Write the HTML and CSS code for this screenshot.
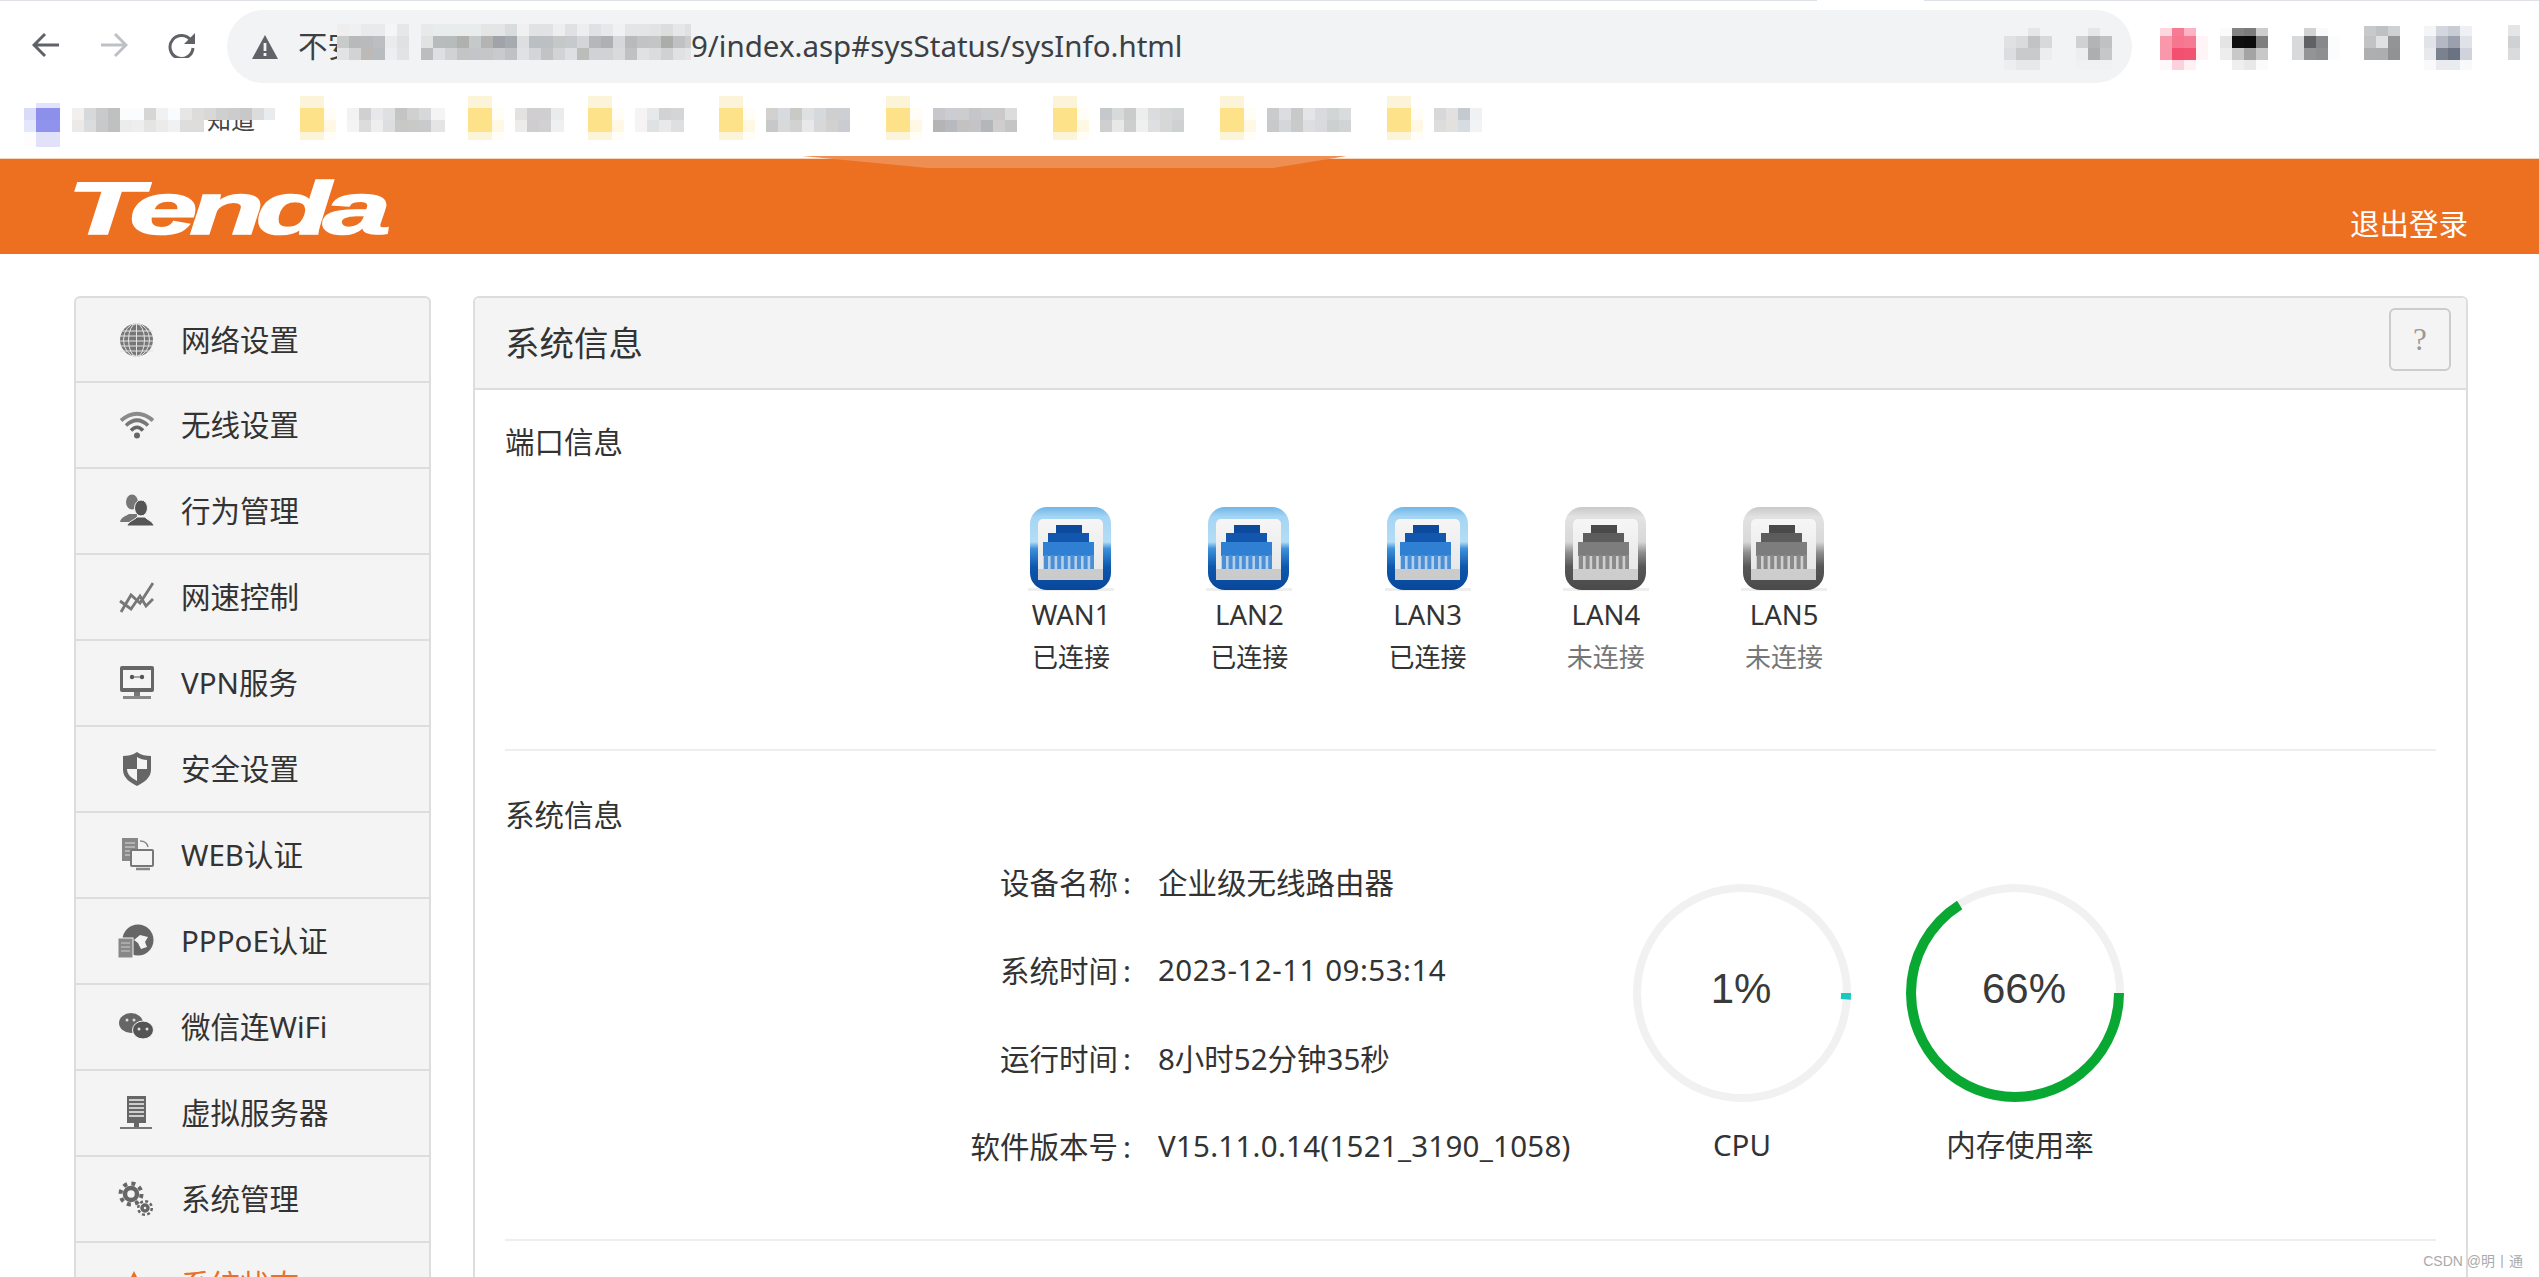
FILE: index.html
```html
<!DOCTYPE html>
<html lang="zh-CN">
<head>
<meta charset="utf-8">
<title>Tenda 系统信息</title>
<link rel="stylesheet" href="styles.css">
</head>
<body>
<svg class="sprite" width="0" height="0" aria-hidden="true">
  <defs>
    <linearGradient id="blueFrame" x1="0" y1="0" x2="0" y2="1">
      <stop offset="0" stop-color="#6fb6e8"/><stop offset=".12" stop-color="#a5d5f4"/><stop offset=".42" stop-color="#b5dcf5"/>
      <stop offset=".5" stop-color="#3f92da"/><stop offset=".72" stop-color="#0d58ad"/><stop offset="1" stop-color="#07479a"/>
    </linearGradient>
    <linearGradient id="greyFrame" x1="0" y1="0" x2="0" y2="1">
      <stop offset="0" stop-color="#c9c9c9"/><stop offset=".12" stop-color="#e2e2e2"/><stop offset=".42" stop-color="#d8d8d8"/>
      <stop offset=".55" stop-color="#8e8e8e"/><stop offset=".72" stop-color="#565656"/><stop offset="1" stop-color="#4a4a4a"/>
    </linearGradient>
    <linearGradient id="innerFrame" x1="0" y1="0" x2="0" y2="1">
      <stop offset="0" stop-color="#f6f6f6"/><stop offset="1" stop-color="#e4e4e4"/>
    </linearGradient>
    <symbol id="rjBlue" viewBox="0 0 86 84">
      <rect x="0" y="81" width="86" height="3" fill="#eeeeee"/>
      <rect x="2" y="0" width="81" height="83" rx="17" fill="url(#blueFrame)"/>
      <rect x="10" y="12" width="65" height="61" rx="5" fill="url(#innerFrame)"/>
      <rect x="10" y="62" width="65" height="11" fill="#cbcbcb"/>
      <rect x="28" y="18" width="26" height="9" fill="#0b4a9c"/>
      <rect x="20" y="26" width="41" height="10" fill="#1257ad"/>
      <rect x="15" y="35" width="51" height="14" fill="#2f80d3"/>
      <rect x="15" y="49" width="51" height="13" fill="#b4cfe9"/>
      <line x1="16" y1="55" x2="66" y2="55" stroke="#4b90d6" stroke-width="14" stroke-dasharray="4 2.6"/>
    </symbol>
    <symbol id="rjGrey" viewBox="0 0 86 84">
      <rect x="0" y="81" width="86" height="3" fill="#eeeeee"/>
      <rect x="2" y="0" width="81" height="83" rx="17" fill="url(#greyFrame)"/>
      <rect x="10" y="12" width="65" height="61" rx="5" fill="url(#innerFrame)"/>
      <rect x="10" y="62" width="65" height="11" fill="#cdcdcd"/>
      <rect x="28" y="18" width="26" height="9" fill="#4a4a4a"/>
      <rect x="20" y="26" width="41" height="10" fill="#5c5c5c"/>
      <rect x="15" y="35" width="51" height="14" fill="#7d7d7d"/>
      <rect x="15" y="49" width="51" height="13" fill="#cfcfcf"/>
      <line x1="16" y1="55" x2="66" y2="55" stroke="#8a8a8a" stroke-width="14" stroke-dasharray="4 2.6"/>
    </symbol>
  </defs>
</svg>

<div class="top-line"></div>
<div class="toolbar">
  <svg class="nav-icon" viewBox="0 0 28 26"><path d="M27 13H3M13 2 2 13l11 11" fill="none" stroke="#5f6368" stroke-width="3"/></svg>
  <svg class="nav-icon" viewBox="0 0 28 26"><path d="M1 13h24M15 2l11 11-11 11" fill="none" stroke="#bdc1c6" stroke-width="3"/></svg>
  <svg class="nav-icon" viewBox="0 0 28 26"><path d="M23 8.5A11.5 11.5 0 1 0 25 16" fill="none" stroke="#5f6368" stroke-width="3"/><path d="M27 1v11H16z" fill="#5f6368"/></svg>
  <div class="address">
    <svg class="warn" viewBox="0 0 26 24"><path d="M13 0 26 24H0z" fill="#5f6368"/><rect x="11.6" y="8" width="2.8" height="8" fill="#f1f3f4"/><rect x="11.6" y="18" width="2.8" height="3" fill="#f1f3f4"/></svg>
    <span class="url-lead">不安全</span>
    <span class="mos mos-url"></span>
    <span class="url-tail">9/index.asp#sysStatus/sysInfo.html</span>
    <span class="mos ext-a"></span>
    <span class="mos ext-b"></span>
  </div>
  <span class="mos ext-pink"></span>
  <span class="mos ext-black"></span>
  <span class="mos ext-grey"></span>
  <span class="mos ext-block"></span>
  <span class="mos ext-person"></span>
  <span class="mos ext-last"></span>
</div>

<div class="bookmarks">
  <span class="mos fav-purple"></span>
  <span class="mos bk m1"><span class="bk-tail">知道</span></span>
  <span class="mos fav-y"></span><span class="mos bk m2"></span>
  <span class="mos fav-y"></span><span class="mos bk m3"></span>
  <span class="mos fav-y"></span><span class="mos bk m4"></span>
  <span class="mos fav-y"></span><span class="mos bk m5"></span>
  <span class="mos fav-y"></span><span class="mos bk m6"></span>
  <span class="mos fav-y"></span><span class="mos bk m7"></span>
  <span class="mos fav-y"></span><span class="mos bk m8"></span>
  <span class="mos fav-y"></span><span class="mos bk m9"></span>
</div>

<header class="brand">
  <span class="notch"></span>
  <span class="logo">Tenda</span>
  <a class="logout">退出登录</a>
</header>

<main class="page">
  <nav class="menu">
    <a class="menu-item">
      <svg class="menu-icon" viewBox="0 0 36 36"><circle cx="18.5" cy="18" r="16.5" fill="#777"/><g fill="none" stroke="#e4e4e4" stroke-width="1"><path d="M2 9h33M2 14h33M2 19h33M2 24h33M2 29h33M18.5 1.500v33"/><ellipse cx="18.5" cy="18" rx="8" ry="16.500"/><ellipse cx="18.5" cy="18" rx="13" ry="16.500"/></g></svg>
      <span>网络设置</span>
    </a>
    <a class="menu-item">
      <svg class="menu-icon" viewBox="0 0 36 36"><g fill="none" stroke-linecap="butt"><path d="M3 13.500Q19 0 35 13.500" stroke="#8a8a8a" stroke-width="3.800"/><path d="M8 18.500Q19 8 30 18.500" stroke="#777" stroke-width="3.600"/><path d="M13 23.500Q19 17 25 23.500" stroke="#666" stroke-width="3.600"/></g><circle cx="19" cy="28.500" r="3" fill="#666"/></svg>
      <span>无线设置</span>
    </a>
    <a class="menu-item">
      <svg class="menu-icon" viewBox="0 0 36 36"><ellipse cx="14" cy="9" rx="6" ry="7.500" fill="#777"/><path d="M2 29c1-5 6-6 9-8h8v8z" fill="#777"/><ellipse cx="23" cy="15" rx="6.500" ry="8" fill="#555" stroke="#f4f4f4"/><path d="M9 33c1-5 8-6 10-9h8c2 3 8 4 9 9z" fill="#555" stroke="#f4f4f4"/></svg>
      <span>行为管理</span>
    </a>
    <a class="menu-item">
      <svg class="menu-icon" viewBox="0 0 36 36"><g fill="none" stroke="#777" stroke-width="2.800"><path d="M3 33 13 16l9 8L35 4"/><path d="M2 22l11 8 9-13 6 10 7-7"/></g></svg>
      <span>网速控制</span>
    </a>
    <a class="menu-item">
      <svg class="menu-icon" viewBox="0 0 36 36"><rect x="2" y="1" width="34" height="26" rx="2" fill="#666"/><rect x="5" y="5" width="28" height="18" fill="#f4f4f4"/><circle cx="14" cy="12" r="2.200" fill="#555"/><circle cx="24" cy="12" r="2.200" fill="#555"/><path d="M16 12h6" stroke="#555"/><rect x="16" y="27" width="6" height="4" fill="#777"/><rect x="5" y="31" width="28" height="3" fill="#888"/></svg>
      <span>VPN服务</span>
    </a>
    <a class="menu-item">
      <svg class="menu-icon" viewBox="0 0 36 36"><path d="M19 1C15 4 9 5 5 5v14c0 8 8 13 14 16 6-3 14-8 14-16V5C28 5 23 4 19 1z" fill="#666"/><path d="M19 6c-3 2-7 3-10 3v9h10zM19 18v12c5-3 10-6 10-12z" fill="#f4f4f4" transform="matrix(-1 0 0 1 38 0)"/></svg>
      <span>安全设置</span>
    </a>
    <a class="menu-item">
      <svg class="menu-icon" viewBox="0 0 36 36"><rect x="4" y="1" width="16" height="23" fill="#888"/><path d="M7 6h10M7 10h10M7 14h10M7 18h10" stroke="#ddd"/><path d="M22 4c4 0 7 1 8 6" fill="none" stroke="#888" stroke-width="1.500"/><rect x="13" y="13" width="22" height="16" rx="1" fill="#f4f4f4" stroke="#777" stroke-width="2"/><path d="M18 32h14" stroke="#888" stroke-width="2.500"/></svg>
      <span>WEB认证</span>
    </a>
    <a class="menu-item">
      <svg class="menu-icon" viewBox="0 0 36 36"><circle cx="20" cy="17" r="15.500" fill="#666"/><path d="M22 12l8 2-3 5 2 5-6 2-3-6-4-3z" fill="#f4f4f4"/><rect x="0" y="15" width="15" height="20" fill="#888" stroke="#f4f4f4"/><path d="M3 20h9M3 24h9M3 28h9" stroke="#ccc"/></svg>
      <span>PPPoE认证</span>
    </a>
    <a class="menu-item">
      <svg class="menu-icon" viewBox="0 0 36 36"><ellipse cx="13" cy="14" rx="12" ry="10" fill="#666"/><ellipse cx="25" cy="21" rx="10.500" ry="9" fill="#555" stroke="#f4f4f4"/><circle cx="9" cy="11" r="1.500" fill="#ddd"/><circle cx="16" cy="11" r="1.500" fill="#ddd"/><circle cx="21" cy="20" r="1.500" fill="#ddd"/><circle cx="29" cy="20" r="1.500" fill="#ddd"/></svg>
      <span>微信连WiFi</span>
    </a>
    <a class="menu-item">
      <svg class="menu-icon" viewBox="0 0 36 36"><rect x="9" y="1" width="19" height="27" fill="#666"/><path d="M11 5h15M11 9h15M11 13h15M11 17h15M11 21h15" stroke="#f0f0f0" stroke-width="1.700"/><rect x="16" y="28" width="5" height="4" fill="#666"/><rect x="2" y="32" width="32" height="2" fill="#777"/></svg>
      <span>虚拟服务器</span>
    </a>
    <a class="menu-item">
      <svg class="menu-icon" viewBox="0 0 36 36"><circle cx="13" cy="13" r="6" fill="none" stroke="#666" stroke-width="4.500"/><circle cx="13" cy="13" r="10.500" fill="none" stroke="#666" stroke-width="4" stroke-dasharray="4 4.250"/><circle cx="27" cy="27" r="3" fill="none" stroke="#666" stroke-width="3.500"/><circle cx="27" cy="27" r="6.800" fill="none" stroke="#666" stroke-width="2.500" stroke-dasharray="3 2.340"/></svg>
      <span>系统管理</span>
    </a>
    <a class="menu-item active">
      <svg class="menu-icon" viewBox="0 0 36 36"><path d="M16 4l14 28H2z" fill="#e8702a"/></svg>
      <span>系统状态</span>
    </a>
  </nav>

  <section class="panel">
    <div class="panel-head">
      <h1 class="panel-title">系统信息</h1>
      <button class="help">?</button>
    </div>
    <div class="panel-body">
      <h2 class="section-title">端口信息</h2>
      <div class="ports">
        <div class="port"><svg class="rj"><use href="#rjBlue"/></svg><div class="port-name">WAN1</div><div class="port-state">已连接</div></div>
        <div class="port"><svg class="rj"><use href="#rjBlue"/></svg><div class="port-name">LAN2</div><div class="port-state">已连接</div></div>
        <div class="port"><svg class="rj"><use href="#rjBlue"/></svg><div class="port-name">LAN3</div><div class="port-state">已连接</div></div>
        <div class="port off"><svg class="rj"><use href="#rjGrey"/></svg><div class="port-name">LAN4</div><div class="port-state">未连接</div></div>
        <div class="port off"><svg class="rj"><use href="#rjGrey"/></svg><div class="port-name">LAN5</div><div class="port-state">未连接</div></div>
      </div>
      <hr class="rule">
      <h2 class="section-title second">系统信息</h2>
      <div class="info">
        <dl class="facts">
          <dt>设备名称<span class="colon">:</span></dt><dd>企业级无线路由器</dd>
          <dt>系统时间<span class="colon">:</span></dt><dd class="num">2023-12-11 09:53:14</dd>
          <dt>运行时间<span class="colon">:</span></dt><dd>8小时52分钟35秒</dd>
          <dt>软件版本号<span class="colon">:</span></dt><dd class="ver">V15.11.0.14(1521_3190_1058)</dd>
        </dl>
        <div class="gauges">
          <figure class="gauge">
            <svg class="dial" viewBox="0 0 218 218">
              <circle class="track" cx="109" cy="109" r="105"/>
              <circle class="arc arc-cpu" cx="109" cy="109" r="104" stroke-dasharray="6.500 653.400"/>
              <text class="dial-text" x="108" y="119">1%</text>
            </svg>
            <figcaption class="gauge-label">CPU</figcaption>
          </figure>
          <figure class="gauge">
            <svg class="dial" viewBox="0 0 218 218">
              <circle class="track" cx="109" cy="109" r="105"/>
              <circle class="arc arc-mem" cx="109" cy="109" r="104" stroke-dasharray="431.300 222.200"/>
              <text class="dial-text" x="118" y="119">66%</text>
            </svg>
            <figcaption class="gauge-label shifted">内存使用率</figcaption>
          </figure>
        </div>
      </div>
      <hr class="rule">
    </div>
  </section>
</main>
<div class="watermark">CSDN @明丨通</div>
</body>
</html>
```

FILE: styles.css
```css
* { box-sizing: border-box; }
html, body { margin: 0; height: 100%; }
body {
  position: relative;
  height: 1277px;
  overflow: hidden;
  background: #fff;
  color: #333;
  font-family: "Noto Sans", "Noto Sans CJK SC", sans-serif;
  font-size: 29.5px;
}
.sprite { display: block; }

/* browser chrome */
.top-line {
  height: 1px;
  background: linear-gradient(90deg, #dfe1e6 0 1817px, #fff 0 1924px, #dfe1e6 0);
}
.toolbar {
  display: flex;
  align-items: flex-start;
  height: 90px;
  padding: 9px 0 0 32px;
}
.nav-icon { width: 28px; height: 26px; margin: 22px 40px 0 0; flex: none; }
.nav-icon:nth-child(3) { margin-right: 31px; }
.address {
  display: flex;
  align-items: flex-start;
  width: 1905px;
  height: 73px;
  padding: 0 20px 0 25px;
  border-radius: 37px;
  background: #f1f3f4;
  flex: none;
  line-height: 71px;
  font-size: 29.5px;
  color: #3c4043;
  white-space: nowrap;
}
.warn { width: 26px; height: 24px; margin: 25px 20px 0 0; flex: none; }
.url-lead { width: 39px; flex: none; }
.url-tail { flex: 1; }
.mos { display: block; flex: none; background-repeat: no-repeat; }
.mos-url {
  position: relative;
  width: 354px;
  height: 36px;
  margin-top: 14px;
  background-image:
    linear-gradient(90deg,#eee 0 12px,#f0f0f1 0 24px,#e8eaeb 0 48px,#f4f5f6 0 60px,#e6e7e8 0 72px,#f1f3f4 0 84px,#e8e9e9 0 96px,#e9ecec 0 144px,#e4e6e6 0 168px,#d9dcdc 0 180px,#f0f0f1 0 192px,#e0e2e3 0 216px,#eee 0 228px,#dfe1e3 0 240px,#eceeef 0 252px,#dfe2e4 0 264px,#e6e8e9 0 276px,#f0f1f2 0 288px,#e4e5e6 0 312px,#e2e3e4 0 324px,#dcdddd 0 336px,#e6e7e8 0 348px,#e0e1e2 0),
    linear-gradient(90deg,#c9cbcb 0 12px,#b7b9ba 0 24px,#b8babc 0 36px,#bcbfc2 0 48px,#e9ebec 0 60px,#dfe1e2 0 72px,#f1f3f4 0 84px,#e1e3e3 0 96px,#b8bcbd 0 108px,#b6bbbc 0 120px,#b0b0ac 0 132px,#c5c9ca 0 144px,#b4b5b3 0 156px,#a0a3a9 0 168px,#a6abaf 0 180px,#dcdedf 0 192px,#b9bfc3 0 204px,#bdc0c2 0 216px,#c4c8c8 0 228px,#c7cacc 0 240px,#d3d6d8 0 252px,#b5b7b9 0 264px,#aeb0b4 0 276px,#d5d7d8 0 288px,#b8babb 0 300px,#c2c3c4 0 312px,#c4c5c5 0 324px,#acadab 0 336px,#c0c1c2 0 348px,#ccc 0),
    linear-gradient(90deg,#e1e3e4 0 12px,#d2d3d5 0 24px,#bcb9b6 0 36px,#b8bbc0 0 48px,#eceeef 0 60px,#e2e3e4 0 72px,#f1f3f4 0 84px,#bcbebe 0 96px,#dde0e2 0 108px,#d0d3d3 0 120px,#c3c5c5 0 132px,#c3c6c8 0 144px,#c4c7c8 0 156px,#c8cacc 0 168px,#bfc2c4 0 180px,#dfe1e2 0 192px,#d3d6d9 0 204px,#c2c4c4 0 216px,#d2d3d4 0 228px,#dde0e3 0 240px,#bcbdbb 0 252px,#d0d3d5 0 264px,#d0d2d4 0 276px,#d8dadb 0 288px,#c0c1c3 0 300px,#e0e1e2 0 312px,#dcdcde 0 324px,#d0d1d2 0 336px,#e0e1e2 0 348px,#e4e5e6 0);
  background-size: 100% 12px;
  background-position: 0 0, 0 12px, 0 24px;
}

/* pixelated extension icons: four rows of mosaic cells */
.ext-a, .ext-b, .ext-pink, .ext-black, .ext-grey { height: 42px; margin-top: 18px; background-position: 0 0, 0 8px, 0 20px, 0 32px; background-size: 100% 8px, 100% 12px, 100% 12px, 100% 10px; }
.ext-a {
  width: 48px;
  background-image:
    linear-gradient(90deg,#f1f3f4 0 24px,#e4e6e8 0 36px,#f1f3f4 0),
    linear-gradient(90deg,#e0e1e3 0 12px,#dadbdc 0 24px,#c2c3c4 0 36px,#d8d9da 0),
    linear-gradient(90deg,#dcdde0 0 12px,#c9cacb 0 36px,#ecedef 0),
    linear-gradient(90deg,#eceef0 0 12px,#e6e8ea 0 36px,#f1f3f4 0);
}
.ext-b {
  width: 36px;
  margin-left: 24px;
  background-image:
    linear-gradient(90deg,#f1f3f4 0 12px,#e4e6e8 0 24px,#f1f3f4 0),
    linear-gradient(90deg,#d0d1d3 0 12px,#b3b4b5 0 24px,#c0c1c2 0),
    linear-gradient(90deg,#eceef0 0 12px,#adaeaf 0 24px,#c6c7c8 0),
    linear-gradient(90deg,#eff1f2 0);
}
.ext-pink {
  width: 48px;
  margin-left: 28px;
  background-image:
    linear-gradient(90deg,#fcd7df 0 12px,#f77a95 0 24px,#fab4c4 0 36px,#fff 0),
    linear-gradient(90deg,#f997ab 0 12px,#f7768f 0 24px,#f77a93 0 36px,#fff5f7 0),
    linear-gradient(90deg,#f997ab 0 12px,#f34f6f 0 24px,#f35371 0 36px,#fff5f7 0),
    linear-gradient(90deg,#fff8fa 0 12px,#fdd0dc 0 24px,#fef0f4 0 36px,#fff 0);
}
.ext-black {
  width: 48px;
  margin-left: 12px;
  background-image:
    linear-gradient(90deg,#fbfbfb 0 12px,#838383 0 24px,#7c7c7c 0 36px,#cdcdcd 0),
    linear-gradient(90deg,#e4e4e4 0 12px,#0e0e0e 0 24px,#0c0c0c 0 36px,#7e7e7e 0),
    linear-gradient(90deg,#ededed 0 12px,#c8c8c8 0 24px,#a4a4a4 0 36px,#c8c8c8 0),
    linear-gradient(90deg,#fff 0 12px,#efefef 0 24px,#e8e8e8 0 36px,#fbfbfb 0);
}
.ext-grey {
  width: 48px;
  margin-left: 24px;
  background-image:
    linear-gradient(90deg,#fff 0 12px,#d2d2d2 0 24px,#fafafa 0 36px,#fff 0),
    linear-gradient(90deg,#d8d9da 0 12px,#5f6164 0 24px,#86888c 0 36px,#fcfcfc 0),
    linear-gradient(90deg,#d8d9da 0 12px,#939495 0 24px,#8d8f91 0 36px,#fcfcfc 0),
    linear-gradient(90deg,#fff 0);
}
.ext-block, .ext-person { height: 44px; margin-top: 16px; background-position: 0 0, 0 10px, 0 22px, 0 34px; background-size: 100% 10px, 100% 12px, 100% 12px, 100% 10px; }
.ext-block {
  width: 36px;
  margin-left: 24px;
  background-image:
    linear-gradient(90deg,#c8c9ca 0 12px,#bfc0c1 0 24px,#cfd0d1 0),
    linear-gradient(90deg,#c2c3c4 0 12px,#e0e1e2 0 24px,#939496 0),
    linear-gradient(90deg,#aeafb0 0 12px,#adaeaf 0 24px,#919294 0),
    linear-gradient(90deg,#fff 0);
}
.ext-person {
  width: 48px;
  margin-left: 24px;
  background-image:
    linear-gradient(90deg,#f4f5f7 0 12px,#d3d6df 0 24px,#c8ccd5 0 36px,#eef0f3 0),
    linear-gradient(90deg,#e2e3e8 0 12px,#b4b8c2 0 24px,#9aa0ad 0 36px,#dfe2e8 0),
    linear-gradient(90deg,#e8e9ec 0 12px,#7a828f 0 24px,#6b7382 0 36px,#d0d3db 0),
    linear-gradient(90deg,#fafafa 0 12px,#eaebef 0 36px,#f8f9fa 0);
}
.ext-last {
  width: 12px;
  height: 35px;
  margin: 15px 0 0 36px;
  background-image: linear-gradient(#e4e5e6 0 11px,#d0d1d2 0 23px,#dadbdc 0);
}

/* bookmarks bar */
.bookmarks {
  display: flex;
  align-items: flex-start;
  height: 67px;
  padding: 5px 0 0 24px;
  white-space: nowrap;
}
.fav-purple {
  width: 36px;
  height: 44px;
  margin: 7px 12px 0 0;
  background-image:
    linear-gradient(90deg,#fff 0 12px,#e2e3fb 0),
    linear-gradient(90deg,#d9dbf9 0 12px,#8c90eb 0),
    linear-gradient(90deg,#e4e6fb 0 12px,#8f93ec 0),
    linear-gradient(90deg,#fdfdff 0 12px,#e1e2fa 0);
  background-position: 0 0, 0 5px, 0 17px, 0 29px;
  background-size: 100% 5px, 100% 12px, 100% 12px, 100% 15px;
}
.fav-y {
  width: 36px;
  height: 44px;
  margin-right: 11px;
  background-image:
    linear-gradient(90deg,#fcf4d8 0 24px,#fff 0),
    linear-gradient(90deg,#fde28a 0 24px,#fffdf6 0),
    linear-gradient(90deg,#fde28a 0 24px,#fef8e4 0),
    linear-gradient(90deg,#fcf4d8 0 24px,#fffdf6 0);
  background-position: 0 0, 0 12px, 0 24px, 0 36px;
  background-size: 100% 12px, 100% 12px, 100% 12px, 100% 8px;
}
.bk {
  height: 24px;
  margin: 12px 24px 0 0;
  background-position: 0 0, 0 12px;
  background-size: 100% 12px, 100% 12px;
}
.m1 {
  width: 203px;
  margin-right: 25px;
  background-image:
    linear-gradient(90deg,#f1f0ee 0 12px,#d6d8da 0 24px,#c8cacb 0 36px,#c0c0c0 0 48px,#fbfcfd 0 72px,#d6d6d4 0 84px,#eff1f3 0 96px,#fafbfc 0 108px,#e6e6e6 0 120px,#dcdcdb 0 132px,#d8d8d8 0 144px,#cfcfcf 0 156px,#ccc 0 168px,#c8c8c8 0 180px,#dcdcdc 0 192px,#e8ecee 0),
    linear-gradient(90deg,#ece9e6 0 12px,#dadcde 0 24px,#c8c9c9 0 36px,#bfc0c0 0 48px,#ececec 0 60px,#eee 0 72px,#e4e4e3 0 84px,#ecebea 0 96px,#f0f1f3 0 108px,#dedddc 0 132px,#fff 0);
}
.bk-tail {
  display: block;
  height: 12px;
  margin: 12px 0 0 135px;
  overflow: hidden;
  font-size: 24px;
  line-height: 0;
  color: #444;
}
.m2 {
  width: 98px;
  margin-right: 23px;
  background-image:
    linear-gradient(90deg,#f2f2f3 0 12px,#d0d0d2 0 24px,#e8e8ea 0 36px,#dfe0e2 0 48px,#c4c4c4 0 60px,#cfd0d0 0 72px,#d6d8da 0 84px,#f4f4f5 0),
    linear-gradient(90deg,#f4f4f5 0 12px,#dcdcdd 0 24px,#eeeeef 0 36px,#dddee0 0 48px,#c8c8c6 0 60px,#c9c9c8 0 72px,#c9cacb 0 84px,#e5e5e6 0);
}
.m3 {
  width: 49px;
  background-image:
    linear-gradient(90deg,#e3e1e1 0 12px,#d0ced0 0 24px,#cfcfd2 0 36px,#e9ebed 0),
    linear-gradient(90deg,#ececeb 0 12px,#cfcdcf 0 24px,#d1d1d3 0 36px,#eef0f2 0);
}
.m4 {
  width: 49px;
  margin-right: 35px;
  background-image:
    linear-gradient(90deg,#f5f3f3 0 12px,#e6e8ea 0 24px,#d2d2d4 0 36px,#d5d5d5 0),
    linear-gradient(90deg,#f5f3f3 0 12px,#dee2e4 0 24px,#e9e9ea 0 36px,#dedfe0 0);
}
.m5 {
  width: 84px;
  margin-right: 36px;
  background-image:
    linear-gradient(90deg,#d1d2d0 0 12px,#d6dbe0 0 24px,#c9c9c6 0 36px,#dee0e2 0 48px,#d6d9dc 0 60px,#cfcfd0 0 72px,#cdd0d3 0),
    linear-gradient(90deg,#c6c8c9 0 12px,#d8d9da 0 24px,#d2d2d2 0 36px,#e8e8e8 0 48px,#d6d8da 0 60px,#d3d1cf 0 72px,#c9ccd1 0);
}
.m6 {
  width: 84px;
  margin-right: 36px;
  background-image:
    linear-gradient(90deg,#c8c8cc 0 12px,#cccdd0 0 24px,#cccdcf 0 36px,#c6c6c8 0 48px,#c9cacc 0 60px,#ccc9cb 0 72px,#dcdcdd 0),
    linear-gradient(90deg,#b5b3b4 0 12px,#b6b9bd 0 24px,#c4c1c1 0 36px,#c4c4c6 0 48px,#b3b7ba 0 60px,#cfcdce 0 72px,#c5c5c7 0);
}
.m7 {
  width: 84px;
  margin-right: 36px;
  background-image:
    linear-gradient(90deg,#c6c9cc 0 12px,#d8d9d9 0 24px,#cacbcb 0 36px,#eceded 0 48px,#dbdcde 0 60px,#d5d8d7 0 72px,#d1d5d5 0),
    linear-gradient(90deg,#cfcfcf 0 12px,#e7e9e9 0 24px,#cdcecd 0 36px,#eff0f0 0 48px,#dddfe1 0 60px,#d6d8d8 0 72px,#cdd1d2 0);
}
.m8 {
  width: 84px;
  margin-right: 36px;
  background-image:
    linear-gradient(90deg,#c9cbcc 0 12px,#dcdde0 0 24px,#c8c9c9 0 36px,#e4e5e7 0 48px,#d8dade 0 60px,#d2d5d5 0 72px,#d8dcdc 0),
    linear-gradient(90deg,#c9c9c9 0 12px,#d3d7da 0 24px,#c9cbcb 0 36px,#dcdee0 0 48px,#d8dade 0 60px,#cdd0d0 0 72px,#d0d4d4 0);
}
.m9 {
  width: 48px;
  margin-right: 0;
  background-image:
    linear-gradient(90deg,#d8d8da 0 12px,#e2e1df 0 24px,#c6c9cf 0 36px,#f0f1f2 0),
    linear-gradient(90deg,#ddd 0 12px,#e2e1de 0 24px,#d6dce2 0 36px,#f2f3f4 0);
}

/* orange brand bar */
.brand {
  position: relative;
  display: flex;
  justify-content: space-between;
  align-items: flex-start;
  height: 96px;
  padding: 0 71px 0 67px;
  border-top: 1px solid #f6d6bf;
  background: #ed7021;
}
.notch {
  position: absolute;
  left: 802px;
  top: -3px;
  width: 545px;
  height: 12px;
  background: #ee8e52;
  clip-path: polygon(0 0, 100% 0, 471px 100%, 126px 100%);
}
.logo {
  display: block;
  margin-top: 5px;
  color: #fff;
  font-family: "Liberation Sans", sans-serif;
  font-style: italic;
  font-weight: 700;
  font-size: 74px;
  line-height: 90px;
  letter-spacing: -5px;
  -webkit-text-stroke: 1.5px #fff;
  transform: scaleX(1.66);
  transform-origin: left center;
}
.logout {
  margin-top: 45px;
  color: #fff;
  font-size: 29.5px;
  line-height: 40px;
}

/* page */
.page {
  display: flex;
  align-items: flex-start;
  gap: 42px;
  padding: 42px 71px 0 74px;
}
.menu {
  width: 357px;
  flex: none;
  border: 2px solid #ddd;
  border-bottom: 0;
  border-radius: 6px 6px 0 0;
  background: #f4f4f4;
}
.menu-item {
  display: flex;
  align-items: center;
  gap: 27px;
  height: 86px;
  padding: 0 0 0 42px;
  border-bottom: 2px solid #ddd;
  line-height: 40px;
  white-space: nowrap;
}
.menu-item:first-child { height: 85px; }
.menu-item.active { color: #e8702a; }
.menu-icon { width: 36px; height: 36px; flex: none; filter: blur(.35px); }

.panel {
  flex: 1;
  min-width: 0;
  height: 1000px;
  border: 2px solid #ddd;
  border-bottom: 0;
  border-radius: 6px 6px 0 0;
}
.panel-head {
  display: flex;
  justify-content: space-between;
  height: 92px;
  padding: 0 15px 0 30px;
  border-bottom: 2px solid #ddd;
  background: #f4f4f4;
  border-radius: 4px 4px 0 0;
}
.panel-title { margin: 0; font-size: 34.500px; font-weight: 400; line-height: 90px; }
.help {
  width: 62px;
  height: 63px;
  margin-top: 10px;
  padding: 0;
  border: 2px solid #ccc;
  border-radius: 6px;
  background: transparent;
  color: #999;
  font-family: "Liberation Serif", serif;
  font-size: 31px;
}
.panel-body { padding: 32px 30px 0; }
.section-title { margin: 0; font-size: 29.500px; font-weight: 400; line-height: 40px; }
.section-title.second { margin-top: 44px; }
.ports {
  display: grid;
  grid-template-columns: repeat(5, 178.25px);
  margin: 45px 0 70px 477px;
  text-align: center;
}
.rj { display: block; width: 86px; height: 84px; margin: 0 auto 2px; }
.port-name, .port-state { line-height: 43px; font-size: 26px; }
.port-name { font-size: 27.500px; }
.port-state { color: #333; }
.port.off .port-state { color: #777; }
.rule { height: 2px; margin: 0; border: 0; background: #eee; }
.info { display: flex; align-items: flex-start; margin: 2px 0 50px; }
.facts {
  display: grid;
  grid-template-columns: 626px auto;
  grid-auto-rows: 88px;
  align-items: center;
  column-gap: 27px;
  width: 1128px;
  height: 352px;
  margin: 0;
  flex: none;
}
.facts dt { text-align: right; }
.facts dd { margin: 0; white-space: nowrap; }
.facts dd.num { letter-spacing: .5px; }
.facts dd.ver { letter-spacing: .25px; }
.colon { margin-left: 5px; }
.gauges { display: flex; gap: 55px; margin-top: 47px; }
.gauge { width: 218px; margin: 0; text-align: center; }
.dial { display: block; width: 218px; height: 218px; }
.track { fill: none; stroke: #f1f1f1; stroke-width: 8; }
.arc { fill: none; stroke-width: 10; }
.arc-cpu { stroke: #17c9c1; }
.arc-mem { stroke: #08a833; }
.dial-text {
  fill: #3a3a3a;
  font-family: "Liberation Sans", sans-serif;
  font-size: 42px;
  text-anchor: middle;
}
.gauge-label { margin-top: 23px; line-height: 40px; white-space: nowrap; }
.gauge-label.shifted { padding-left: 10px; }

.watermark {
  position: absolute;
  right: 16px;
  bottom: 8px;
  color: #aaa;
  font-family: "Liberation Sans", "Noto Sans CJK SC", sans-serif;
  font-size: 14px;
  line-height: 16px;
}
```
